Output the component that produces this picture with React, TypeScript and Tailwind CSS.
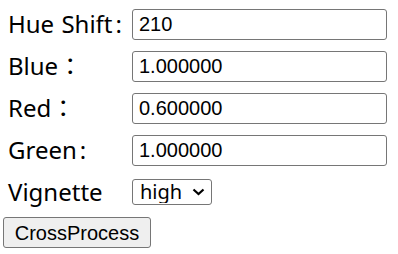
import { useState } from 'react';

const labelFont = { fontFamily: '"Noto Sans", "Noto Sans CJK JP", sans-serif' };
const fieldFont = { fontFamily: '"Liberation Sans", Arial, sans-serif' };

// label text; a plain ":" gets a bit of room like the original font gives it
function LabelText({ text }: { text: string }) {
  if (text.endsWith(':')) {
    return (
      <>
        {text.slice(0, -1)}
        <span className="ml-[3px]">:</span>
      </>
    );
  }
  return <>{text}</>;
}

function FieldRow({ label, value }: { label: string; value: string }) {
  const [v, setV] = useState(value);
  return (
    <div className="flex h-[42px] items-center">
      <label className="w-[129px] pl-[5px] text-[24px] leading-[32px] text-black [word-spacing:1px]" style={labelFont}>
        <LabelText text={label} />
      </label>
      <input
        value={v}
        onChange={(e) => setV(e.target.value)}
        className="h-[31px] w-[255px] rounded-[3px] border border-[#767676] bg-white px-[6px] text-[20px] text-black outline-none"
        style={fieldFont}
      />
    </div>
  );
}

export default function App() {
  const [vignette, setVignette] = useState('high');

  return (
    <div className="h-[254px] w-[398px] bg-white pl-[3px] pt-[3px]">
      <FieldRow label="Hue Shift:" value="210" />
      <FieldRow label="Blue：" value="1.000000" />
      <FieldRow label="Red：" value="0.600000" />
      <FieldRow label="Green:" value="1.000000" />

      {/* Vignette select */}
      <div className="flex h-[42px] items-center">
        <label className="w-[129px] pl-[5px] text-[24px] leading-[32px] text-black" style={labelFont}>
          Vignette
        </label>
        <div className="relative">
          <select
            value={vignette}
            onChange={(e) => setVignette(e.target.value)}
            className="h-[26px] w-[80px] appearance-none rounded-[3px] border border-[#767676] bg-white pl-[7px] text-[20px] leading-[22px] text-black outline-none"
            style={labelFont}
          >
            <option value="low">low</option>
            <option value="medium">medium</option>
            <option value="high">high</option>
          </select>
          <svg
            className="pointer-events-none absolute right-[7px] top-[9px]"
            width="13"
            height="8"
            viewBox="0 0 13 8"
            fill="none"
          >
            <path d="M1.5 1.5 L6.5 6 L11.5 1.5" stroke="#000" strokeWidth="2.2" />
          </svg>
        </div>
      </div>

      <button
        className="mt-[4px] h-[31px] w-[148px] rounded-[3px] border border-[#767676] bg-[#efefef] text-[20px] text-black"
        style={fieldFont}
      >
        CrossProcess
      </button>
    </div>
  );
}
